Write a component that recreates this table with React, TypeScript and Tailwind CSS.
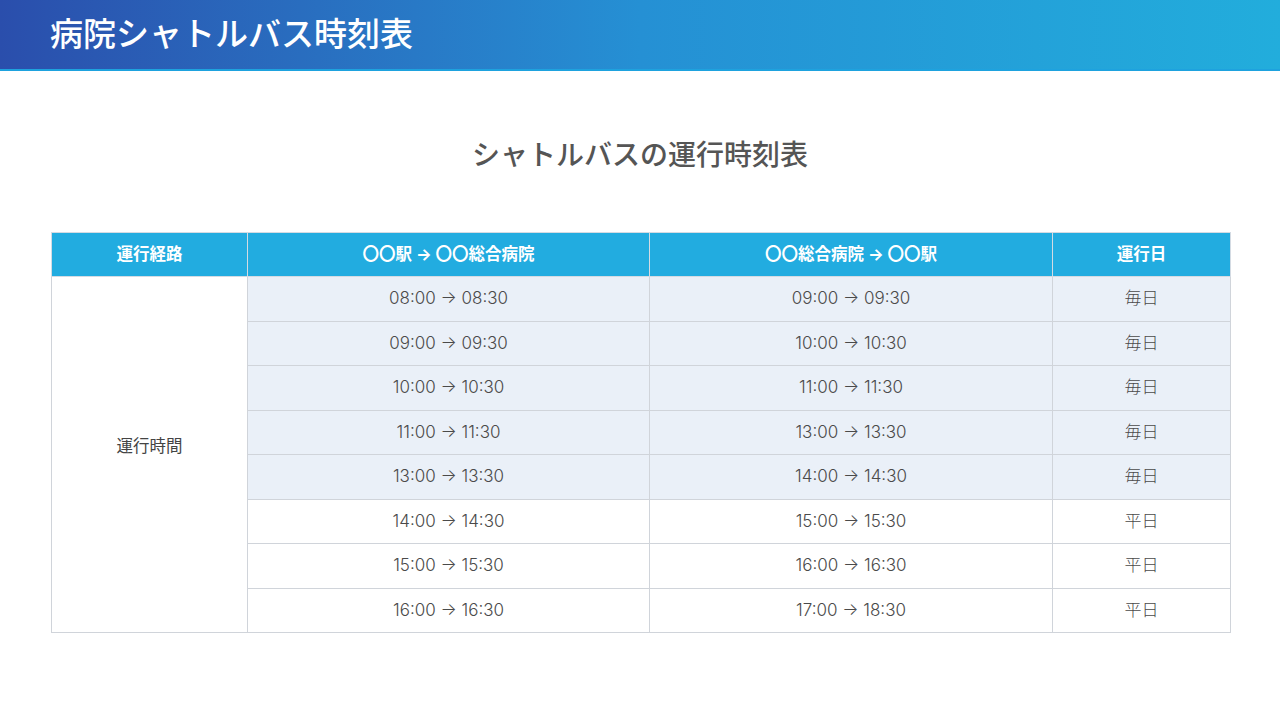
import React from 'react';

const ROWS: [string, string, string, boolean][] = [
  ['08:00 → 08:30', '09:00 → 09:30', '毎日', true],
  ['09:00 → 09:30', '10:00 → 10:30', '毎日', true],
  ['10:00 → 10:30', '11:00 → 11:30', '毎日', true],
  ['11:00 → 11:30', '13:00 → 13:30', '毎日', true],
  ['13:00 → 13:30', '14:00 → 14:30', '毎日', true],
  ['14:00 → 14:30', '15:00 → 15:30', '平日', false],
  ['15:00 → 15:30', '16:00 → 16:30', '平日', false],
  ['16:00 → 16:30', '17:00 → 18:30', '平日', false],
];

const FONT = { fontFamily: 'Inter, "Noto Sans CJK JP", sans-serif' };

export default function App() {
  return (
    <div className="w-[1280px] h-[720px] bg-white overflow-hidden" style={FONT}>
      <header className="h-[71px] bg-gradient-to-r from-[#2a4eac] via-[#2590d4] via-50% to-[#22addc] border-b-2 border-[#1ea2de] flex items-center px-[50px]">
        <h1 className="text-white text-[33px] font-medium leading-none">病院シャトルバス時刻表</h1>
      </header>

      <h2 className="mt-[70px] text-center text-[28px] font-medium text-[#555] leading-none">シャトルバスの運行時刻表</h2>

      <div className="mt-[63px] px-[51px]">
        <table className="w-[1179px] border-collapse table-fixed text-center">
          <colgroup>
            <col className="w-[196px]" />
            <col className="w-[402px]" />
            <col className="w-[403px]" />
            <col className="w-[178px]" />
          </colgroup>
          <thead>
            <tr className="h-[44px] bg-[#22ace0] text-white text-[16.5px] font-bold">
              <th className="border border-[#d4dbe3]">運行経路</th>
              <th className="border border-[#d4dbe3]">〇〇駅 → 〇〇総合病院</th>
              <th className="border border-[#d4dbe3]">〇〇総合病院 → 〇〇駅</th>
              <th className="border border-[#d4dbe3]">運行日</th>
            </tr>
          </thead>
          <tbody className="text-[17px] font-light text-[#4a4a4a]">
            {ROWS.map(([a, b, d, shaded], i) => (
              <tr key={i} className={`h-[44.5px] ${shaded ? 'bg-[#eaf0f8]' : 'bg-white'}`}>
                {i === 0 && (
                  <td rowSpan={ROWS.length} className="bg-white border border-[#d0d4da] pb-[17px] text-[16.5px] font-normal text-[#444]">
                    運行時間
                  </td>
                )}
                <td className="border border-[#d0d4da]">{a}</td>
                <td className="border border-[#d0d4da]">{b}</td>
                <td className="border border-[#d0d4da]">{d}</td>
              </tr>
            ))}
          </tbody>
        </table>
      </div>
    </div>
  );
}
